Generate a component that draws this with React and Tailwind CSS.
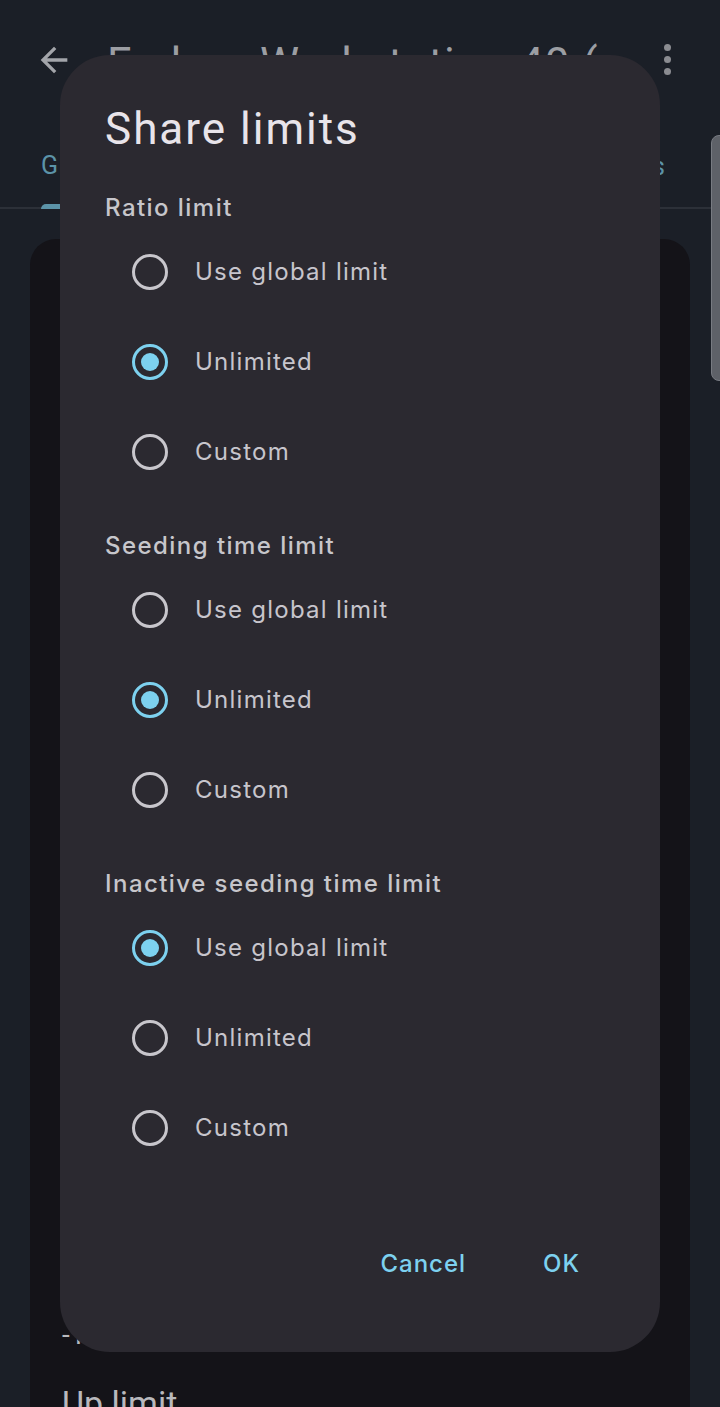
import React from "react";

const sections = [
  { title: "Ratio limit", selected: 1 },
  { title: "Seeding time limit", selected: 1 },
  { title: "Inactive seeding time limit", selected: 0 },
];

const options = ["Use global limit", "Unlimited", "Custom"];

const Radio = ({ checked }) => (
  <div
    className={`w-[36px] h-[36px] rounded-full border-[3.5px] flex items-center justify-center ${
      checked ? "border-[#7dd1ef]" : "border-[#c8c6cc]"
    }`}
  >
    {checked && <div className="w-[18px] h-[18px] rounded-full bg-[#7dd1ef]" />}
  </div>
);

const App = () => {
  return (
    <div className="relative h-[1407px] w-[720px] overflow-hidden bg-[#1b1f27] font-['Roboto',sans-serif]">
      {/* top bar */}
      <div className="h-[120px] flex items-center pl-[34px] pr-[49px]">
        <svg width="40" height="40" viewBox="0 0 24 24" className="text-[#a3a5aa]">
          <path d="M20 11H7.83l5.59-5.59L12 4l-8 8 8 8 1.41-1.41L7.83 13H20v-2z" fill="currentColor" />
        </svg>
        <span className="ml-[33px] mt-[8px] text-[44px] text-[#9c9ea3] whitespace-nowrap tracking-[1px]">Fedora Workstation 40 (</span>
        <div className="ml-auto flex flex-col gap-[5px] mt-[-2px]">
          <div className="w-[7px] h-[7px] rounded-full bg-[#8b8c91]" />
          <div className="w-[7px] h-[7px] rounded-full bg-[#8b8c91]" />
          <div className="w-[7px] h-[7px] rounded-full bg-[#8b8c91]" />
        </div>
      </div>

      {/* tabs */}
      <div className="h-[89px] border-b-[2px] border-[#2c3038] flex items-end justify-between px-[41px]">
        <div className="flex flex-col items-start">
          <span className="text-[25px] text-[#5b93a8] leading-none mb-[26px]">G</span>
          <div className="w-[40px] h-[5px] rounded-t-full bg-[#5b93a8] mb-[-2px]" />
        </div>
        <span className="text-[25px] text-[#5b93a8] leading-none mb-[28px] mr-[14px]">s</span>
      </div>

      {/* card behind */}
      <div className="mx-[30px] mt-[30px] h-[1200px] rounded-t-[26px] bg-[#141318] px-[32px]">
        <div className="h-[1075px]" />
        <div className="text-[28px] text-[#b9b9bd]">-1</div>
        <div className="mt-[22px] text-[34px] text-[#b9b9bd]">Up limit</div>
      </div>

      {/* scrollbar */}
      <div className="absolute right-[-8px] top-[135px] w-[17px] h-[246px] rounded-[8px] bg-[#5e6168] border border-[#787b82]" />

      {/* dialog */}
      <div className="absolute left-[60px] top-[55px] w-[600px] h-[1297px] rounded-[50px] bg-[#2b2930] px-[45px] pt-[48px] flex flex-col">
        <h2 className="text-[44px] leading-[52px] tracking-[2px] text-[#e8e4ea] font-['Roboto',sans-serif]">Share limits</h2>
        {sections.map((s, si) => (
          <div key={s.title} className={si === 0 ? "mt-[37px]" : "mt-[33px]"}>
            <div className="h-[32px] flex items-center text-[24px] font-medium tracking-[1.45px] text-[#c7c6cb] font-['Inter',sans-serif]">
              {s.title}
            </div>
            <div className="mt-[3px]">
              {options.map((o, oi) => (
                <div key={o} className="h-[90px] flex items-center pl-[27px]">
                  <Radio checked={oi === s.selected} />
                  <span className="ml-[27px] text-[24px] tracking-[1.25px] text-[#c7c5cc] font-['Inter',sans-serif]">{o}</span>
                </div>
              ))}
            </div>
          </div>
        ))}
        <div className="mt-[67px] mr-[-3px] flex justify-end gap-[1px]">
          <button className="h-[48px] px-[38px] text-[24px] font-medium tracking-[1px] text-[#7dd1ef] font-['Inter',sans-serif]">
            Cancel
          </button>
          <button className="h-[48px] px-[38px] text-[24px] font-medium tracking-[1px] text-[#7dd1ef] font-['Inter',sans-serif]">
            OK
          </button>
        </div>
      </div>
    </div>
  );
};

export default App;
